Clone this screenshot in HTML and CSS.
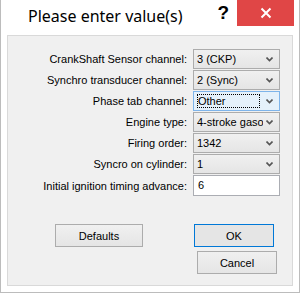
FILE: index.html
```html
<!DOCTYPE html>
<html lang="en">
<head>
    <meta charset="UTF-8">
    <title>Please enter value(s)</title>
    <link rel="stylesheet" href="styles.css">
</head>
<body>
    <div class="window">
        <div class="titlebar">
            <span class="title">Please enter value(s)</span>
            <span class="help">?</span>
            <span class="close">
                <svg width="12" height="12" viewBox="0 0 12 12">
                    <path d="M1.5 1.5 L10.5 10.5 M10.5 1.5 L1.5 10.5" stroke="#fff" stroke-width="2"/>
                </svg>
            </span>
        </div>

        <div class="panel">
            <div class="fields">
                <label>CrankShaft Sensor channel:</label>
                <div class="combo"><span class="value">3 (CKP)</span><span class="arrow"></span></div>

                <label>Synchro transducer channel:</label>
                <div class="combo"><span class="value">2 (Sync)</span><span class="arrow"></span></div>

                <label>Phase tab channel:</label>
                <div class="combo focused"><span class="value"><span class="focus-rect">Other</span></span><span class="arrow"></span></div>

                <label>Engine type:</label>
                <div class="combo"><span class="value">4-stroke gaso</span><span class="arrow"></span></div>

                <label>Firing order:</label>
                <div class="combo"><span class="value">1342</span><span class="arrow"></span></div>

                <label>Syncro on cylinder:</label>
                <div class="combo"><span class="value">1</span><span class="arrow"></span></div>

                <label>Initial ignition timing advance:</label>
                <div class="textbox">6</div>
            </div>

            <div class="buttons">
                <button class="btn defaults">Defaults</button>
                <div class="right-buttons">
                    <button class="btn ok">OK</button>
                    <button class="btn cancel">Cancel</button>
                </div>
            </div>
        </div>
    </div>
</body>
</html>
```

FILE: styles.css
```css
* {
    margin: 0;
    padding: 0;
    box-sizing: border-box;
}

body {
    font-family: 'Liberation Sans', Arial, sans-serif;
    font-size: 11px;
    color: #000;
    background: #fff;
}

.window {
    width: 300px;
    height: 293px;
    background: #fff;
    border: 1px solid #bcbcbc;
    border-top: none;
    display: flex;
    flex-direction: column;
}

.titlebar {
    height: 35px;
    display: flex;
    align-items: flex-start;
    position: relative;
}

.title {
    font-family: 'Noto Sans', sans-serif;
    font-size: 16px;
    margin: 5px 0 0 27px;
    color: #000;
}

.help {
    font-family: 'Liberation Sans', Arial, sans-serif;
    font-weight: bold;
    font-size: 19px;
    margin: 2px 0 0 35px;
}

.close {
    position: absolute;
    top: 0;
    left: 236px;
    width: 57px;
    height: 26px;
    background: #e04646;
    display: flex;
    align-items: center;
    justify-content: center;
}

.panel {
    margin-left: 6px;
    width: 286px;
    height: 251px;
    background: #f0f0f0;
    border: 1px solid #d9d9d9;
    padding: 13px 12px 0 0;
}

.fields {
    display: grid;
    grid-template-columns: 1fr 87px;
    column-gap: 6px;
    row-gap: 1px;
    align-items: center;
}

.fields label {
    text-align: right;
}

.combo {
    height: 20px;
    border: 1px solid #acacac;
    background: linear-gradient(#f0f0f0, #e5e5e5);
    display: flex;
    align-items: center;
    padding-left: 3px;
}

.combo .value {
    flex: 1;
    white-space: nowrap;
    overflow: hidden;
}

.combo .arrow {
    width: 16px;
    height: 100%;
    background: url("data:image/svg+xml,%3Csvg xmlns='http://www.w3.org/2000/svg' width='7' height='5'%3E%3Cpath d='M0.5 0.5 L3.5 3.5 L6.5 0.5' fill='none' stroke='%23555' stroke-width='1.6'/%3E%3C/svg%3E") no-repeat 3px center;
}

.combo.focused {
    border-color: #7eb4ea;
    background: #e5f1fb;
}

.combo.focused .value {
    padding: 1px 0;
}

.focus-rect {
    display: block;
    width: 63px;
    border: 1px dotted #000;
    line-height: 12px;
}

.textbox {
    height: 21px;
    border: 1px solid #abadb3;
    background: #fff;
    padding: 3px 0 0 4px;
}

.buttons {
    display: flex;
    margin-top: 28px;
    padding-left: 47px;
}

.right-buttons {
    display: flex;
    flex-direction: column;
    gap: 4px;
    margin-left: 51px;
}

.btn {
    font-family: 'Liberation Sans', Arial, sans-serif;
    font-size: 11px;
    height: 23px;
    background: linear-gradient(#f0f0f0, #e5e5e5);
    border: 1px solid #acacac;
    color: #000;
}

.defaults {
    width: 88px;
}

.ok {
    width: 80px;
    border-color: #0078d7;
    background: #e5e5e5;
}

.cancel {
    width: 80px;
    margin-left: 3px;
}
```
